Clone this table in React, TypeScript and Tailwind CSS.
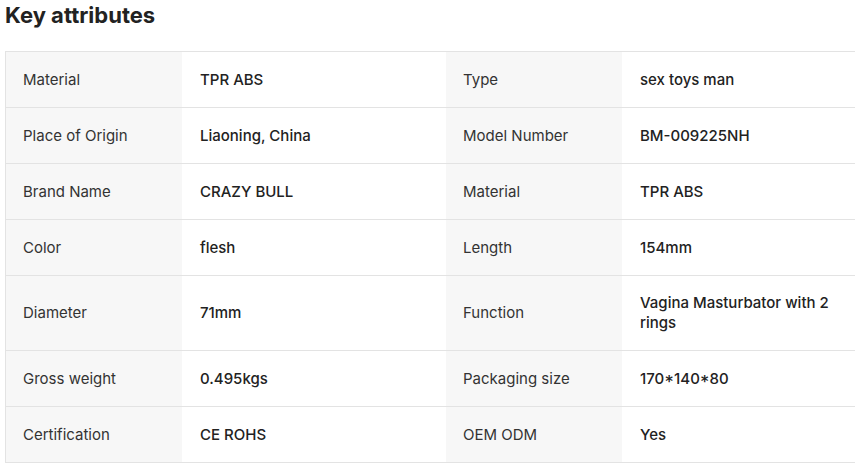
import React from 'react'

// ── Data ─────────────────────────────────────────────────────────────────────

const rows: [string, string, string, string][] = [
  ['Material', 'TPR ABS', 'Type', 'sex toys man'],
  ['Place of Origin', 'Liaoning, China', 'Model Number', 'BM-009225NH'],
  ['Brand Name', 'CRAZY BULL', 'Material', 'TPR ABS'],
  ['Color', 'flesh', 'Length', '154mm'],
  ['Diameter', '71mm', 'Function', 'Vagina Masturbator with 2 rings'],
  ['Gross weight', '0.495kgs', 'Packaging size', '170*140*80'],
  ['Certification', 'CE ROHS', 'OEM ODM', 'Yes'],
]

// ── Cells ────────────────────────────────────────────────────────────────────

function LabelCell({ text }: { text: string }) {
  return (
    <div className="flex min-h-[55px] w-[176px] shrink-0 items-center bg-[#f7f7f7] px-[17px] py-[17px] text-[#333]">
      {text}
    </div>
  )
}

function ValueCell({ text, width }: { text: string; width: string }) {
  return (
    <div
      className={`flex min-h-[55px] shrink-0 items-center py-[17px] pl-[18px] pr-[20px] font-medium text-[#222] ${width}`}
    >
      {text}
    </div>
  )
}

// ── Page ─────────────────────────────────────────────────────────────────────

export default function App() {
  return (
    <div
      className="h-[465px] w-[855px] overflow-hidden bg-white"
      style={{ fontFamily: 'Inter, "Noto Sans", sans-serif' }}
    >
      <h2 className="pl-[5px] pt-[1px] text-[22px] font-bold leading-[28px] text-[#222]">
        Key attributes
      </h2>

      <div className="ml-[5px] mt-[22px] w-[885px] border-l border-t border-[#e3e3e3] text-[15px] leading-[20px]">
        {rows.map(([l1, v1, l2, v2], i) => (
          <div key={i} className="flex border-b border-[#e3e3e3]">
            <LabelCell text={l1} />
            <ValueCell text={v1} width="w-[264px]" />
            <LabelCell text={l2} />
            <ValueCell text={v2} width="w-[266px]" />
          </div>
        ))}
      </div>
    </div>
  )
}
